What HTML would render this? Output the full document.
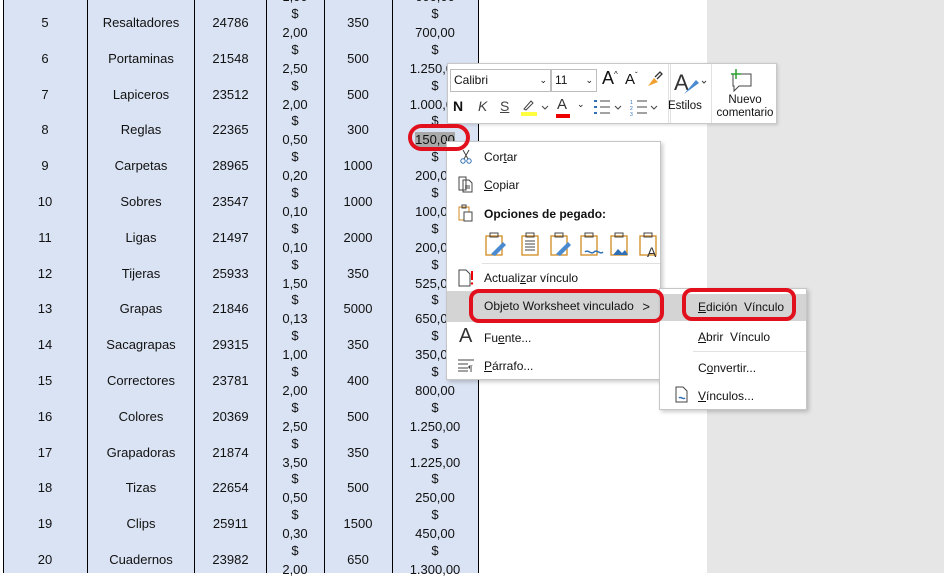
<!DOCTYPE html>
<html><head><meta charset="utf-8"><style>
*{margin:0;padding:0;box-sizing:border-box}
body{width:944px;height:573px;overflow:hidden;background:#fff;font-family:"Liberation Sans",sans-serif;position:relative;color:#111}
#gray{position:absolute;left:707px;top:0;width:237px;height:573px;background:#e6e6e6}
#tbl{position:absolute;left:3px;top:0;width:476px;height:573px;background:#dae3f3;border-left:1px solid #000;border-right:1px solid #000}
.v{position:absolute;top:0;width:1px;height:573px;background:#000}
.r{position:absolute;left:0;width:944px;height:36px;font-size:13px}
.r span{position:absolute;top:0;text-align:center;line-height:36px;white-space:nowrap}
.r span.p{line-height:19px;top:-1px}
.a{left:3px;width:84px}.b{left:87px;width:108px}.c{left:195px;width:71px}.d{left:266px;width:58px}.e{left:324px;width:68px}.f{left:392px;width:86px}
.tb{position:absolute;left:447px;top:63px;width:330px;height:61px;background:#fff;border:1px solid #c8c8c8;box-shadow:1px 1px 3px rgba(0,0,0,.15);font-size:12px}
.box{position:absolute;border:1px solid #bdbdbd;height:23px;top:5px;font-size:12px;line-height:21px;padding-left:3px}
.menu{position:absolute;background:#fff;border:1px solid #c6c6c6;box-shadow:2px 2px 4px rgba(0,0,0,.2);font-size:12px}
.it{position:absolute;left:0;right:0;height:24px;line-height:24px;padding-left:37px}
.hl{background:#d4d4d4}
.sep{position:absolute;height:1px;background:#e1e1e1}
.red{position:absolute;border:4px solid #e2101c;border-radius:12px}
</style></head><body>
<div id="gray"></div>
<div id="tbl"></div>
<div class="v" style="left:87px"></div><div class="v" style="left:194px"></div><div class="v" style="left:266px"></div><div class="v" style="left:324px"></div><div class="v" style="left:392px"></div>

<div class="r" style="top:-30.8px"><span class="a">4</span><span class="b">Borradores</span><span class="c">21234</span><span class="d p">$<br>1,00</span><span class="e">600</span><span class="f p">$<br>600,00</span></div>
<div class="r" style="top:5px"><span class="a">5</span><span class="b">Resaltadores</span><span class="c">24786</span><span class="d p">$<br>2,00</span><span class="e">350</span><span class="f p">$<br>700,00</span></div>
<div class="r" style="top:40.8px"><span class="a">6</span><span class="b">Portaminas</span><span class="c">21548</span><span class="d p">$<br>2,50</span><span class="e">500</span><span class="f p">$<br>1.250,00</span></div>
<div class="r" style="top:76.6px"><span class="a">7</span><span class="b">Lapiceros</span><span class="c">23512</span><span class="d p">$<br>2,00</span><span class="e">500</span><span class="f p">$<br>1.000,00</span></div>
<div class="r" style="top:112.4px"><span class="a">8</span><span class="b">Reglas</span><span class="c">22365</span><span class="d p">$<br>0,50</span><span class="e">300</span><span class="f p">$<br><span style="position:static;background:#a9a9a9;line-height:15px">150,00</span></span></div>
<div class="r" style="top:148.2px"><span class="a">9</span><span class="b">Carpetas</span><span class="c">28965</span><span class="d p">$<br>0,20</span><span class="e">1000</span><span class="f p">$<br>200,00</span></div>
<div class="r" style="top:184px"><span class="a">10</span><span class="b">Sobres</span><span class="c">23547</span><span class="d p">$<br>0,10</span><span class="e">1000</span><span class="f p">$<br>100,00</span></div>
<div class="r" style="top:219.8px"><span class="a">11</span><span class="b">Ligas</span><span class="c">21497</span><span class="d p">$<br>0,10</span><span class="e">2000</span><span class="f p">$<br>200,00</span></div>
<div class="r" style="top:255.6px"><span class="a">12</span><span class="b">Tijeras</span><span class="c">25933</span><span class="d p">$<br>1,50</span><span class="e">350</span><span class="f p">$<br>525,00</span></div>
<div class="r" style="top:291.4px"><span class="a">13</span><span class="b">Grapas</span><span class="c">21846</span><span class="d p">$<br>0,13</span><span class="e">5000</span><span class="f p">$<br>650,00</span></div>
<div class="r" style="top:327.2px"><span class="a">14</span><span class="b">Sacagrapas</span><span class="c">29315</span><span class="d p">$<br>1,00</span><span class="e">350</span><span class="f p">$<br>350,00</span></div>
<div class="r" style="top:363px"><span class="a">15</span><span class="b">Correctores</span><span class="c">23781</span><span class="d p">$<br>2,00</span><span class="e">400</span><span class="f p">$<br>800,00</span></div>
<div class="r" style="top:398.8px"><span class="a">16</span><span class="b">Colores</span><span class="c">20369</span><span class="d p">$<br>2,50</span><span class="e">500</span><span class="f p">$<br>1.250,00</span></div>
<div class="r" style="top:434.6px"><span class="a">17</span><span class="b">Grapadoras</span><span class="c">21874</span><span class="d p">$<br>3,50</span><span class="e">350</span><span class="f p">$<br>1.225,00</span></div>
<div class="r" style="top:470.4px"><span class="a">18</span><span class="b">Tizas</span><span class="c">22654</span><span class="d p">$<br>0,50</span><span class="e">500</span><span class="f p">$<br>250,00</span></div>
<div class="r" style="top:506.2px"><span class="a">19</span><span class="b">Clips</span><span class="c">25911</span><span class="d p">$<br>0,30</span><span class="e">1500</span><span class="f p">$<br>450,00</span></div>
<div class="r" style="top:542px"><span class="a">20</span><span class="b">Cuadernos</span><span class="c">23982</span><span class="d p">$<br>2,00</span><span class="e">650</span><span class="f p">$<br>1.300,00</span></div>

<!-- mini toolbar -->
<div class="tb">
 <div class="box" style="left:2px;width:101px">Calibri<span style="position:absolute;right:3px;top:0;font-size:9px">&#8964;</span></div>
 <div class="box" style="left:103px;width:46px">11<span style="position:absolute;right:3px;top:0;font-size:9px">&#8964;</span></div>
 <div style="position:absolute;left:154px;top:4px;font-size:18px">A<sup style="font-size:8px">^</sup></div>
 <div style="position:absolute;left:177px;top:7px;font-size:15px">A<sup style="font-size:8px">ˇ</sup></div>
 <svg style="position:absolute;left:197px;top:6px" width="18" height="20"><path d="M3 16 L9 8 L13 12 Z" fill="#f0a030"/><path d="M10 7 L15 2 L17 4 L12 9" stroke="#333" fill="none" stroke-width="1.3"/></svg>
 <div style="position:absolute;left:222px;top:0;width:1px;height:59px;background:#e1e1e1"></div>
 <div style="position:absolute;left:5px;top:34px;font-weight:bold;font-size:14px">N</div>
 <div style="position:absolute;left:30px;top:34px;font-style:italic;font-size:14px;color:#444">K</div>
 <div style="position:absolute;left:52px;top:34px;text-decoration:underline;font-size:14px;color:#444">S</div>
 <svg style="position:absolute;left:72px;top:33px" width="30" height="20"><path d="M4 12 L11 4 L13 6 L6 13 Z" fill="none" stroke="#444"/><rect x="1" y="15" width="16" height="4" fill="#ffff40"/><path d="M22 9 l3 3 l3-3" stroke="#444" fill="none"/></svg>
 <div style="position:absolute;left:109px;top:32px;font-size:15px;color:#333">A</div>
 <div style="position:absolute;left:108px;top:50px;width:14px;height:4px;background:#e00"></div>
 <div style="position:absolute;left:129px;top:35px;font-size:9px">&#8964;</div>
 <svg style="position:absolute;left:145px;top:33px" width="80" height="20"><g fill="#2f6fb5"><rect x="1" y="3" width="3" height="2"/><rect x="1" y="9" width="3" height="2"/><rect x="1" y="15" width="3" height="2"/></g><g stroke="#444"><path d="M7 4h10M7 10h10M7 16h10"/><path d="M44 4h10M44 10h10M44 16h10"/></g><path d="M22 9l3 3l3-3M58 9l3 3l3-3" stroke="#444" fill="none"/><text x="37" y="7" font-size="5" fill="#2f6fb5">1</text><text x="37" y="13" font-size="5" fill="#2f6fb5">2</text><text x="37" y="19" font-size="5" fill="#2f6fb5">3</text></svg>
 <div style="position:absolute;left:220px;top:0;width:1px;height:59px;background:#e1e1e1"></div>
 <svg style="position:absolute;left:226px;top:4px" width="34" height="30"><text x="0" y="22" font-size="22" fill="#333" font-family="Liberation Sans">A</text><path d="M10 26 L22 12 L25 15 Z" fill="#4a8ad0"/><path d="M28 13l2 2l2-2" stroke="#444" fill="none"/></svg>
 <div style="position:absolute;left:220px;top:36px;font-size:11.5px">Estilos</div>
 <div style="position:absolute;left:263px;top:0;width:1px;height:59px;background:#e1e1e1"></div>
 <svg style="position:absolute;left:279px;top:4px" width="28" height="26"><path d="M6 6h18v12h-12l-5 5v-5h-1z" fill="none" stroke="#444"/><path d="M9 1v10M4 6h10" stroke="#2ca02c" stroke-width="1.5"/></svg>
 <div style="position:absolute;left:264px;top:30px;width:66px;text-align:center;font-size:11.5px;line-height:13px">Nuevo<br>comentario</div>
</div>

<!-- context menu -->
<div class="menu" style="left:446px;top:141px;width:215px;height:239px">
 <svg style="position:absolute;left:12px;top:7px" width="14" height="16"><path d="M4 1 L9 10 M10 1 L5 10" stroke="#444"/><circle cx="4" cy="12" r="2.2" fill="none" stroke="#2f6fb5"/><circle cx="10" cy="12" r="2.2" fill="none" stroke="#2f6fb5"/></svg>
 <div class="it" style="top:3px">Cor<u>t</u>ar</div>
 <svg style="position:absolute;left:10px;top:33px" width="18" height="18"><path d="M2 2h7v13h-7z M6 5h6l3 3v9h-9z" fill="#fff" stroke="#444"/><path d="M8 11h5M8 13h5" stroke="#444"/></svg>
 <div class="it" style="top:31px"><u>C</u>opiar</div>
 <svg style="position:absolute;left:10px;top:62px" width="18" height="18"><path d="M2 3h10v13h-10z" fill="none" stroke="#d08a20"/><path d="M5 1h4v3h-4z" fill="none" stroke="#444"/><rect x="7" y="8" width="8" height="9" fill="#fff" stroke="#444"/></svg>
 <div class="it" style="top:60px;font-weight:bold">Opciones de pegado:</div>
 <svg style="position:absolute;left:36px;top:88px" width="175" height="28"><g fill="#fff" stroke="#d08a20" stroke-width="1.3"><rect x="3" y="6" width="16" height="19"/><rect x="39" y="6" width="16" height="19"/><rect x="68" y="6" width="16" height="19"/><rect x="98" y="6" width="16" height="19"/><rect x="128" y="6" width="16" height="19"/><rect x="157" y="6" width="16" height="19"/></g><g stroke="#444" fill="none"><path d="M7 3h8v4h-8zM43 3h8v4h-8zM72 3h8v4h-8zM102 3h8v4h-8zM132 3h8v4h-8zM161 3h8v4h-8z"/><path d="M42 11h10M42 14h10M42 17h10M42 20h10"/></g><path d="M8 24 L20 12 L23 15 L12 26z" fill="#4a8ad0"/><path d="M73 24 L85 12 L88 15 L77 26z" fill="#4a8ad0"/><path d="M102 22c3-3 6 3 9 0s6 3 9 0" stroke="#2f6fb5" fill="none" stroke-width="1.5"/><path d="M130 25l5-6 4 4 3-3 3 5z" fill="#2f6fb5"/><text x="164" y="27" font-size="14" fill="#333" font-family="Liberation Sans">A</text></svg>
 <div class="sep" style="left:35px;right:0;top:121px"></div>
 <svg style="position:absolute;left:10px;top:127px" width="18" height="18"><path d="M2 1h7l4 4v12h-11z" fill="#fff" stroke="#444"/><path d="M15 2v9" stroke="#e00" stroke-width="2"/><circle cx="15" cy="14.5" r="1.2" fill="#e00"/></svg>
 <div class="it" style="top:124px">Actuali<u>z</u>ar vínculo</div>
 <div class="it hl" style="top:149px;height:31px;line-height:31px">Objeto Worksheet vinculado<span style="position:absolute;right:10px;font-size:13px">&gt;</span></div>
 <div style="position:absolute;left:12px;top:183px;font-size:20px;color:#333">A</div>
 <div class="it" style="top:184px">Fu<u>e</u>nte...</div>
 <svg style="position:absolute;left:10px;top:216px" width="18" height="14"><path d="M1 2h16M1 6h10M1 10h10M1 13h10" stroke="#444"/><text x="11" y="14" font-size="9" fill="#444">¶</text></svg>
 <div class="it" style="top:212px"><u>P</u>árrafo...</div>
</div>

<!-- submenu -->
<div class="menu" style="left:659px;top:288px;width:148px;height:122px">
 <div class="it hl" style="top:5px;height:27px;line-height:27px;padding-left:38px"><u>E</u>dición&nbsp; Vínculo</div>
 <div class="it" style="top:36px;padding-left:38px"><u>A</u>brir&nbsp; Vínculo</div>
 <div class="sep" style="left:33px;right:0;top:62px"></div>
 <div class="it" style="top:67px;padding-left:38px">C<u>o</u>nvertir...</div>
 <svg style="position:absolute;left:14px;top:97px" width="16" height="18"><path d="M2 1h7l4 4v11h-11z" fill="#fff" stroke="#444"/><path d="M5 12c2-2 4 2 6 0" stroke="#2f6fb5" fill="none" stroke-width="1.5"/></svg>
 <div class="it" style="top:95px;padding-left:38px"><u>V</u>ínculos...</div>
</div>

<!-- red marks -->
<div class="red" style="left:408px;top:124px;width:62px;height:27px;border-radius:14px"></div>
<div class="red" style="left:469px;top:289px;width:195px;height:34px;border-radius:10px"></div>
<div class="red" style="left:682px;top:288px;width:114px;height:33px;border-radius:10px"></div>
</body></html>
